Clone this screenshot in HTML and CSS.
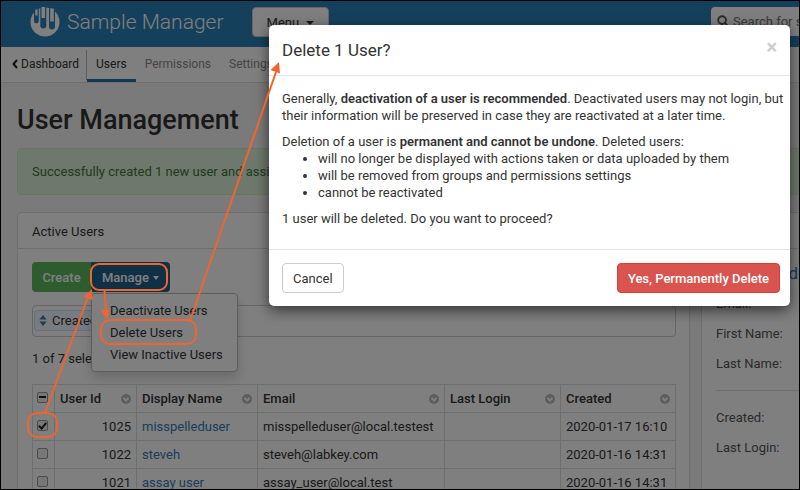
FILE: index.html
```html
<!DOCTYPE html>
<html lang="en">
<head>
<meta charset="utf-8">
<title>Sample Manager - User Management</title>
<link rel="stylesheet" href="styles.css">
</head>
<body>
<div class="frame">
  <header class="topbar">
    <a class="brand" href="#">
      <svg class="logo" viewBox="0 0 30 30" aria-hidden="true">
        <circle cx="15" cy="15" r="14.5" fill="#fff"/>
        <g fill="#2b80b8">
          <path d="M4 4v10a2.4 2.4 0 0 0 4.800 0V1.500z"/>
          <path d="M10.300 0v18.500a3 3 0 0 0 6 0V0z"/>
          <path d="M19 1v18.500a3 3 0 0 0 6 0V4z"/>
        </g>
        <g fill="#fff">
          <path d="M5.200 2.500h2.400v6H5.200z"/>
          <path d="M11.500 0h3.600v11h-3.600z"/>
          <path d="M20.200 1.500h3.600v13h-3.600z"/>
        </g>
      </svg>
      <span>Sample Manager</span>
    </a>
    <button class="menu-btn" type="button">Menu <i class="caret"></i></button>
    <label class="search">
      <svg viewBox="0 0 14 14" aria-hidden="true"><circle cx="5.500" cy="5.500" r="4.200"/><path d="M8.700 8.700l4 4"/></svg>
      <input type="text" placeholder="Search for something" aria-label="Search">
    </label>
  </header>

  <nav class="tabs">
    <a class="back" href="#"><svg viewBox="0 0 6 10" aria-hidden="true"><path d="M5 1L1.500 5 5 9"/></svg>Dashboard</a>
    <a class="tab active" href="#">Users</a>
    <a class="tab" href="#">Permissions</a>
    <a class="tab" href="#">Settings</a>
  </nav>

  <main class="content">
    <h1>User Management</h1>
    <div class="alert">Successfully created 1 new user and assigned roles.</div>
    <div class="panels">
      <section class="panel">
        <h2>Active Users</h2>
        <div class="panel-body">
          <div class="actions">
            <button class="create" type="button">Create</button>
            <button class="manage" type="button">Manage <i class="caret"></i></button>
            <ul class="dropdown">
              <li><a href="#">Deactivate Users</a></li>
              <li><a href="#">Delete Users</a></li>
              <li><a href="#">View Inactive Users</a></li>
            </ul>
          </div>
          <div class="filter">
            <span class="tag"><svg viewBox="0 0 8 12" aria-hidden="true"><path d="M0 5l4-5 4 5zM0 7l4 5 4-5z"/></svg>Created</span>
          </div>
          <p class="count">1 of 7 selected</p>
          <table>
            <colgroup><col class="c-check"><col class="c-id"><col class="c-name"><col class="c-email"><col class="c-login"><col class="c-created"></colgroup>
            <thead>
              <tr>
                <th><input class="some" type="checkbox" aria-label="Select all"></th>
                <th><div>User Id<svg viewBox="0 0 10 10"><circle cx="5" cy="5" r="5"/><path d="M2.500 4L5 6.500 7.500 4"/></svg></div></th>
                <th><div>Display Name<svg viewBox="0 0 10 10"><circle cx="5" cy="5" r="5"/><path d="M2.500 4L5 6.500 7.500 4"/></svg></div></th>
                <th><div>Email<svg viewBox="0 0 10 10"><circle cx="5" cy="5" r="5"/><path d="M2.500 4L5 6.500 7.500 4"/></svg></div></th>
                <th><div>Last Login<svg viewBox="0 0 10 10"><circle cx="5" cy="5" r="5"/><path d="M2.500 4L5 6.500 7.500 4"/></svg></div></th>
                <th><div>Created<svg viewBox="0 0 10 10"><circle cx="5" cy="5" r="5"/><path d="M2.500 4L5 6.500 7.500 4"/></svg></div></th>
              </tr>
            </thead>
            <tbody>
              <tr><td><input type="checkbox" checked aria-label="Select misspelleduser"></td><td class="num">1025</td><td><a href="#">misspelleduser</a></td><td>misspelleduser@local.testest</td><td></td><td>2020-01-17 16:10</td></tr>
              <tr><td><input type="checkbox" aria-label="Select steveh"></td><td class="num">1022</td><td><a href="#">steveh</a></td><td>steveh@labkey.com</td><td></td><td>2020-01-16 14:31</td></tr>
              <tr><td><input type="checkbox" aria-label="Select assay user"></td><td class="num">1021</td><td><a href="#">assay user</a></td><td>assay_user@local.test</td><td></td><td>2020-01-16 14:31</td></tr>
            </tbody>
          </table>
        </div>
      </section>
      <aside class="panel details">
        <h2></h2>
        <div class="panel-body">
          <a class="user-name" href="#">misspelleduser</a>
          <p>Email:</p>
          <p>First Name:</p>
          <p>Last Name:</p>
          <hr>
          <p>Created:</p>
          <p>Last Login:</p>
        </div>
      </aside>
    </div>
  </main>

  <div class="backdrop"></div>

  <div class="modal" role="dialog" aria-labelledby="modal-title">
    <div class="modal-header">
      <h3 id="modal-title">Delete 1 User?</h3>
      <button class="close" type="button" aria-label="Close">×</button>
    </div>
    <div class="modal-body">
      <p>Generally, <b>deactivation of a user is recommended</b>. Deactivated users may not login, but their information will be preserved in case they are reactivated at a later time.</p>
      <div>Deletion of a user is <b>permanent and cannot be undone</b>. Deleted users:</div>
      <ul>
        <li>will no longer be displayed with actions taken or data uploaded by them</li>
        <li>will be removed from groups and permissions settings</li>
        <li>cannot be reactivated</li>
      </ul>
      <p>1 user will be deleted. Do you want to proceed?</p>
    </div>
    <div class="modal-footer">
      <button class="cancel" type="button">Cancel</button>
      <button class="delete" type="button">Yes, Permanently Delete</button>
    </div>
  </div>

  <svg class="callouts" viewBox="1 1 798 488" aria-hidden="true">
    <g fill="none" stroke="#ee6530" stroke-width="2">
      <rect x="91" y="264" width="76" height="26" rx="8"/>
      <rect x="101" y="320" width="95" height="24" rx="9"/>
      <rect x="28" y="413" width="29" height="24" rx="9"/>
      <path d="M45 413L88 297M104.500 290l1.500 22M190 321L276 72"/>
    </g>
    <g fill="#ee6530">
      <path d="M92 289l-8.500 8 9 3z"/>
      <path d="M106.500 320l-5.500-10 9-.5z"/>
      <path d="M279 62l-8.500 8 9.500 3.500z"/>
    </g>
  </svg>
</div>
</body>
</html>
```
FILE: styles.css
```css
*, *::before { box-sizing: border-box; }

body {
  margin: 0;
  font: 13px/17px Roboto, "Liberation Sans", sans-serif;
  color: #333;
}

h1, h2, h3, p, ul { margin: 0; padding: 0; font-weight: 400; }
a { color: #337ab7; text-decoration: none; }
button, input { font: inherit; color: inherit; }

.frame {
  position: relative;
  height: 100vh;
  border: 1px solid #000;
  overflow: hidden;
  background: #f5f5f5;
}

.caret {
  display: inline-block;
  margin-left: 1px;
  border: 3px solid transparent;
  border-top: 4px solid;
  border-bottom: 0;
  vertical-align: middle;
}

/* Top bar */
.topbar {
  display: flex;
  align-items: flex-start;
  height: 46px;
  padding: 6px 0 0 29px;
  background: #2b80b8;
}
.brand {
  display: flex;
  gap: 7px;
  color: #fff;
  font-size: 21px;
  line-height: 30px;
  font-weight: 300;
  white-space: nowrap;
}
.brand span { width: 158px; }
.logo { width: 30px; height: 30px; }
.menu-btn {
  height: 30px;
  width: 77px;
  margin-left: 27px;
  border: 1px solid #ccc;
  border-radius: 4px;
  background: #fff;
}
.menu-btn .caret { margin-left: 4px; border-width: 4px 4px 0; }
.search {
  display: flex;
  align-items: center;
  gap: 3px;
  width: 88px;
  height: 29px;
  margin-left: auto;
  padding-left: 6px;
  border-radius: 4px 0 0 4px;
  background: #fff;
  overflow: hidden;
}
.search svg { flex: none; width: 13px; height: 13px; fill: none; stroke: #555; stroke-width: 2; }
.search input { width: 150px; flex: none; border: 0; padding: 0; background: none; }
.search input::placeholder { color: #777; opacity: 1; }

/* Tabs */
.tabs {
  display: flex;
  height: 36px;
  background: #fff;
  border-bottom: 1px solid #ddd;
  font-size: 12px;
}
.tabs a { color: #888; padding: 8px 9px 0; line-height: 18px; }
.tabs .back {
  display: flex;
  align-items: flex-start;
  gap: 3px;
  height: 30px;
  margin-top: 3px;
  padding: 5px 7px 0 11px;
  border-right: 1px solid #bbb;
  color: #333;
}
.back svg { width: 6px; height: 10px; margin-top: 4px; fill: none; stroke: #222; stroke-width: 2; }
.tabs .active { color: #333; border-bottom: 3px solid #2574a8; }

/* Content */
.content { padding: 18px 0 0 16px; }
h1 { font-size: 27px; line-height: 38px; font-weight: 500; }
.alert {
  margin: 9px -9px 17px 0;
  padding: 14px;
  border: 1px solid #d6e9c6;
  border-radius: 4px;
  background: #dff0d8;
  color: #3c763d;
}
.panels { display: grid; grid-template-columns: minmax(0, 1fr) 98px; gap: 11px; }
.panel { min-height: 300px; border: 1px solid #ddd; border-radius: 4px; background: #fff; }
.panel h2 { height: 36px; padding: 10px 14px; border-bottom: 1px solid #ddd; font-size: 13px; line-height: 17px; }
.panel-body { padding: 13px 13px 13px 14px; }

.actions { position: relative; display: flex; }
.actions button { height: 30px; padding: 0; border: 0; color: #fff; font-weight: 500; }
.actions .create { width: 59px; border-radius: 4px 0 0 4px; background: #5cb85c; }
.actions .manage { width: 79px; border-radius: 0 4px 4px 0; background: #21608c; }
.dropdown {
  position: absolute;
  z-index: 1;
  left: 59px;
  top: 31px;
  padding: 6px 14px 5px 18px;
  border: 1px solid #bbb;
  border-radius: 4px;
  background: #fff;
  box-shadow: 0 6px 12px rgba(0, 0, 0, .18);
  list-style: none;
  white-space: nowrap;
}
.dropdown a { display: block; color: #333; line-height: 22px; }

.filter { height: 32px; margin-top: 13px; padding: 4px 1px; border: 1px solid #ccc; border-radius: 4px; }
.tag {
  display: inline-flex;
  align-items: center;
  gap: 5px;
  height: 21px;
  padding: 0 4px;
  border: 1px solid #c2e0ff;
  border-radius: 3px;
  background: #f0f7ff;
}
.tag svg { width: 8px; height: 11px; fill: #4878a8; }
.count { margin: 13px 0 17px; }

table { width: 100%; table-layout: fixed; border-collapse: collapse; }
.c-check { width: 22px; }
.c-id { width: 82px; }
.c-name { width: 121px; }
.c-email { width: 187px; }
.c-login { width: 116px; }
th, td { height: 28px; padding: 0 5px; border: 1px solid #ddd; text-align: left; white-space: nowrap; }
th { font-weight: 500; }
th div { display: flex; align-items: center; justify-content: space-between; }
th svg { width: 10px; height: 10px; fill: #bbb; }
th svg path { fill: none; stroke: #fff; stroke-width: 2; }
td.num { text-align: right; }
td:first-child, th:first-child { padding: 0 0 3px 4px; }
input[type="checkbox"] {
  appearance: none;
  display: block;
  width: 11px;
  height: 11px;
  margin: 0;
  border: 1px solid #999;
  border-radius: 2px;
  background: #eee center / 9px 9px no-repeat;
}
input[type="checkbox"].some { background-image: linear-gradient(#222, #222); background-size: 7px 2px; }
input:checked::before {
  content: "";
  display: block;
  width: 5px;
  height: 8px;
  margin: 0 0 0 2px;
  border: solid #222;
  border-width: 0 2px 2px 0;
  transform: rotate(40deg);
}

.details { border-right: 0; border-radius: 4px 0 0 0; overflow: hidden; color: #555; }
.details .panel-body { padding-right: 0; }
.details p { margin-bottom: 13px; white-space: nowrap; }
.user-name { display: block; margin-bottom: 11px; font-size: 17px; line-height: 22px; }
.details hr { margin: 18px 0; border: 0; border-top: 1px solid #ddd; }

/* Dialog */
.backdrop { position: absolute; z-index: 2; inset: 0; background: rgba(0, 0, 0, .5); }
.modal {
  position: absolute;
  z-index: 3;
  top: 24px;
  right: 9px;
  width: 521px;
  border-radius: 5px;
  background: #fff;
  box-shadow: 0 4px 14px rgba(0, 0, 0, .6);
}
.modal-header { display: flex; justify-content: space-between; padding: 13px; border-bottom: 1px solid #e5e5e5; }
.modal-header h3 { font-size: 17px; line-height: 24px; }
.close { height: 18px; padding: 0; border: 0; background: none; color: #ccc; font-size: 20px; line-height: 18px; font-weight: 700; }
.modal-body { padding: 14px 2px 13px 13px; }
.modal-body p { margin-bottom: 9px; }
.modal-body ul { margin-bottom: 9px; padding-left: 36px; }
.modal-body b { font-weight: 600; }
.modal-footer { display: flex; justify-content: space-between; padding: 13px 10px 13px 13px; border-top: 1px solid #e5e5e5; }
.modal-footer button { height: 30px; padding: 0 10px; border: 1px solid #ccc; border-radius: 4px; background: #fff; }
.modal-footer .delete { border-color: #d43f3a; background: #d9534f; color: #fff; font-weight: 500; }

.callouts { position: absolute; z-index: 4; left: 0; top: 0; width: 798px; height: 488px; pointer-events: none; }
```
